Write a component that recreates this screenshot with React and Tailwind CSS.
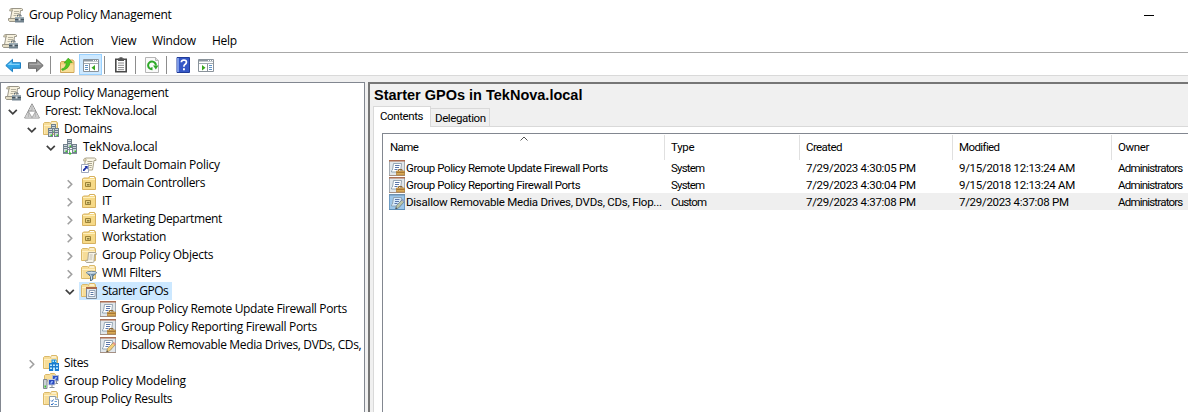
import React from "react";

function Svg({ children, className = "" }) {
  return (
    <svg viewBox="0 0 16 16" className={`block h-4 w-4 shrink-0 ${className}`}>
      {children}
    </svg>
  );
}

function ConsoleIcon({ className }) {
  return (
    <Svg className={className}>
      <path d="M3.5 1.5h10q1.5.2 1 2h-2l-1 8h-9l1.5-8z" fill="#f6f0dc" stroke="#9a9688" />
      <path d="M3 1.5q1.6.3 1.4 2.5H1.6Q1.4 2 3 1.5z" fill="#ddd3b4" stroke="#9a9688" strokeWidth=".7" />
      <path d="M6 4.5h5M6 6.5h5M5.5 8.5h3" stroke="#b5b19f" />
      <path d="M.5 11.5h8v3h-7q-1.5-.7-1-3z" fill="#e3dcc4" stroke="#9a9688" />
      <path d="M9.5 9.5V8H13v1.5" fill="none" stroke="#5d6971" />
      <path d="M7 10h9v5.5H7z" fill="#70818c" />
      <path d="M7 10h9v1.5H7z" fill="#9babb4" />
      <path d="M7 12.5h9" stroke="#46545e" />
      <path d="M10.5 11.5h2v2h-2z" fill="#e2e7e9" />
    </Svg>
  );
}

function ForestIcon() {
  return (
    <Svg>
      <path d="M8 .8 15.4 15H.6z" fill="#f4f4f4" stroke="#8d8d8d" />
      <path d="M8 1.8 11.3 8H4.7zM4.4 8.5 7.8 14.5H1zM11.6 8.5 15 14.5H8.2z" fill="#d0d0d0" />
      <path d="M8 2v5.5L5 8M4.4 9v5M11.6 9v5" stroke="#ababab" fill="none" strokeWidth=".7" />
      <path d="M4.3 8.2h7.4L8 14.7z" fill="#fff" stroke="#929292" strokeWidth=".8" />
    </Svg>
  );
}

function FolderBase() {
  return (
    <>
      <path d="M.5 13.5v-11l1-1h5l1 1 1-2h5l1 1.5v11.5z" fill="#f7dd98" stroke="#dab868" />
      <path d="M8.5 1.5h4.5v1H8.5z" fill="#fff" />
      <path d="M1 4.5h13" stroke="#fff0c3" />
      <path d="M1 5.5h1v7.5H1z" fill="#fbe9b4" />
    </>
  );
}

function Tower({ x, y }) {
  return (
    <g transform={`translate(${x} ${y})`}>
      <path d="M0 0h5v9H0z" fill="#73828d" />
      <path d="M1 1h3v7H1z" fill="#cfd7dd" />
      <path d="M1 2.500h3M1 4.500h3" stroke="#6b7d8a" />
      <path d="M2.500 6.500H4V8H2.500z" fill="#35d322" />
    </g>
  );
}

function DomainsIcon() {
  return (
    <Svg>
      <FolderBase />
      <Tower x={8} y={3} />
      <Tower x={5} y={7} />
      <Tower x={11} y={7} />
    </Svg>
  );
}

function DomainIcon() {
  return (
    <Svg>
      <Tower x={5} y={0} />
      <path d="M7.500 9v5M3 10.500h9" stroke="#82909a" />
      <Tower x={1} y={5} />
      <Tower x={10} y={5} />
      <path d="M1 14.500h14" stroke="#82909a" />
      <path d="M7 13.500h2v2H7z" fill="#35c827" />
    </Svg>
  );
}

function LinkIcon() {
  return (
    <Svg>
      <path d="M4.5 1h9q2 .5 1.5 2.5h-2L11.500 13H3z" fill="#faf6e6" stroke="#aaa38b" />
      <path d="M4 1q1.700.6 1 3H2.500Q2.300 1.500 4 1z" fill="#e4d9b7" stroke="#aaa38b" strokeWidth=".7" />
      <path d="M6.500 4.500h5M6.500 6.500h4.500M7 8.500h4M8.500 10.500h2" stroke="#aaa58f" />
      <path d="M.5 7.500h7v8h-7z" fill="#fff" stroke="#9fa7bc" />
      <path d="M2 14v-1.500L4.500 10 3.500 9h3.200v3.500L5.700 11.300 3.300 14z" fill="#1b2fa5" />
    </Svg>
  );
}

function OuIcon() {
  return (
    <Svg>
      <path d="M1.500 14.500V4l1-1h5l1-1.500h5l1 1.500v11.500z" fill="#f6d987" stroke="#d6b160" />
      <path d="M9 2h4v1H9z" fill="#fff" />
      <path d="M2 4.500h12" stroke="#fff0bd" />
      <path d="M4.500 7.500h5v4h-5z" fill="#e6cf80" stroke="#9c8236" />
      <path d="M6 9h2.500v1.500H6z" fill="#8a7d40" />
    </Svg>
  );
}

function GpoFolderIcon() {
  return (
    <Svg>
      <FolderBase />
      <path d="M7.500 5.500H14q1.800.3 1.300 2h-1.800L13 14.500q-.3 1-1.300 1H5.500q-1.200-.5-.7-2.200h2z" fill="#f7f4e9" stroke="#a49e8c" strokeWidth=".9" />
      <path d="M8.700 8h3M8.500 10h3M8.300 12h3" stroke="#b3ad9c" strokeWidth=".8" />
    </Svg>
  );
}

function WmiIcon() {
  return (
    <Svg>
      <FolderBase />
      <path d="M5.500 7.500h10l-3.700 4v3L9.500 16v-4.500z" fill="#6f90ac" stroke="#44617a" strokeWidth=".8" />
      <ellipse cx="10.500" cy="7.800" rx="5" ry="1.500" fill="#d0e0ec" stroke="#59758c" strokeWidth=".8" />
      <path d="M9.500 9.500 10.500 12v2.500" stroke="#d0e2f0" fill="none" />
    </Svg>
  );
}

function StarterFolderIcon() {
  return (
    <Svg>
      <FolderBase />
      <path d="M5.500 4.500h10v11h-10z" fill="#dfe9f3" stroke="#7e8b99" />
      <path d="M5 4h11v2H5z" fill="#a8694c" />
      <path d="M8.500 7.500H14v6H7.500z" fill="#fff" stroke="#7b8ea3" strokeWidth=".8" />
      <path d="M9.500 9.500h3M9.500 11.500h3" stroke="#5574a2" />
    </Svg>
  );
}

function StarterIcon({ edit, active }) {
  return (
    <Svg>
      <path d="M.5.5h15v15H.5z" fill={active ? "#9cc6ea" : "#e1e6ea"} stroke={active ? "#6f9dc4" : "#a5adb4"} />
      <path d="M0 0h16v1.500H0z" fill={active ? "#6e91b0" : "#ad6e53"} />
      <path d="M0 15h16v1H0z" fill={active ? "#5e8fb7" : "#a48f83"} />
      <path d="M4.500 3.500h8L11.500 12h-9q-.5-1.500 1-2z" fill={active ? "#d8ebfb" : "#fff"} stroke="#8b9dad" strokeWidth=".9" />
      <path d="M6 5.500h4.500M6 7.500h4M5.500 9.500h3" stroke="#5b76aa" />
      {edit ? (
        <>
          <path d="m6.500 15 1-3.500 6-6 2 2-6 6.500z" fill={active ? "#b9c3a6" : "#f4cf78"} stroke={active ? "#64788a" : "#a08a58"} strokeWidth=".7" />
          <path d="m12.700 6.300 1.300-1.300 2 2-1.300 1.300z" fill={active ? "#8f9fc4" : "#e4938b"} />
          <path d="m6.500 15 .6-1.800 1.300 1.200z" fill="#444" />
        </>
      ) : (
        <>
          <path d="M9.500 11V9.500H13V11" stroke="#8d6a38" fill="none" />
          <path d="M7.500 11h8v4h-8z" fill="#d8aa58" stroke="#b17f36" strokeWidth=".7" />
          <path d="M7.500 12.500h8" stroke="#9a6a2c" strokeWidth=".8" />
        </>
      )}
    </Svg>
  );
}

function SitesIcon() {
  return (
    <Svg>
      <FolderBase />
      <path d="M8.500 4.500h5v11h-5z" fill="#1689d8" />
      <path d="M6 8h10v8H6z" fill="#1b7bcd" />
      <path d="M9.500 5.500H11V7H9.500zM12 5.500h1V7h-1zM7 9.500h2V11H7zM10 9.500h2V11h-2zM13 9.500h2V11h-2zM7 12.500h2V14H7zM10 12.500h2V16h-2zM13 12.500h2V14h-2z" fill="#b9e8ff" />
    </Svg>
  );
}

function ModelingIcon() {
  return (
    <Svg>
      <path d="M1.500 8V2.500l1-1h4l1-1h4l1 1V8z" fill="#f7dd98" stroke="#dab868" />
      <path d="M.5 6.500H4v9H.5z" fill="#ccd2d6" stroke="#828b92" />
      <path d="M1.500 12.500H3v2H1.500z" fill="#37ca27" />
      <path d="M9.500 2.500h6V8h-6z" fill="#3052c2" stroke="#b5bdc8" />
      <path d="M11 6.500 12.500 4H14l-1 2.500z" fill="#94b8ff" />
      <path d="M5.500 6.500H12V12H5.500z" fill="#2948be" stroke="#cbd1db" />
      <path d="M7 10.500 8.500 8H10l-1 2.500z" fill="#94b8ff" />
      <path d="M6.500 14.500h5M9 12v2M13.500 8v2.500M12.500 10.500H15" stroke="#848d96" fill="none" />
    </Svg>
  );
}

function ResultsIcon() {
  return (
    <Svg>
      <FolderBase />
      <path d="M6.500 5.500h6l3 3v7h-9z" fill="#fff" stroke="#8a9bac" />
      <path d="M12.500 5.500v3h3" fill="#dce5ed" stroke="#8a9bac" strokeWidth=".8" />
      <path d="m8 9.500 1 1 1.500-2M8 13l1 1 1.500-2" stroke="#2a68c0" fill="none" />
      <path d="M11.500 10.500H14M11.500 13.500H14" stroke="#6aa0d5" />
    </Svg>
  );
}

function Arrow({ forward }) {
  return (
    <Svg className={forward ? "-scale-x-100" : ""}>
      <path d="M.8 8.500 7.500 2.300v3.400h8v5.600h-8v3.400z" fill={forward ? "#8b8b8b" : "#2ea5e8"} stroke={forward ? "#6a6a6a" : "#1c7fc2"} />
      <path d="M2.500 8.100 6.600 4.500v2.200h8v1.400z" fill={forward ? "#ababab" : "#82d3fb"} />
    </Svg>
  );
}

function UpFolderIcon() {
  return (
    <Svg>
      <path d="M1.500 15.500v-10l1-1h5l1-1.500H14l1 1.500v11z" fill="#f2cf79" stroke="#cfa659" />
      <path d="M2 7.500h12.500V15H2z" fill="#f8df98" />
      <path d="M2.500 12Q7 11 7.200 6H5l4.300-4.900 4 4.400H11q-.5 6-7.500 8z" fill="#4cc51f" stroke="#3a9a20" strokeWidth=".6" />
    </Svg>
  );
}

function PaneIcon({ right }) {
  return (
    <Svg>
      <path d="M.5 2.500h15v12H.5z" fill="#fff" stroke="#8a939b" />
      <path d="M1 3h14v1.500H1z" fill="#8d98a1" />
      <path d="M10 3.500h1M12 3.500h1M14 3.500h1" stroke="#fff" />
      <path d="M1 6.500h14" stroke="#a2abb2" />
      <path d={right ? "M9.500 7v7" : "M6.500 7v7"} stroke="#8a939b" />
      <path d={right ? "M11 8.500h3M11 10.500h3M11 12.500h3" : "M2 8.500h3M2 10.500h3M2 12.500h3"} stroke="#5f92c4" />
      <path d={right ? "m4 8 3.500 2.700L4 13.400z" : "m12 8-3.500 2.700 3.500 2.700z"} fill="#37a71d" />
    </Svg>
  );
}

function ClipboardIcon() {
  return (
    <Svg>
      <path d="M2.800 2.300h10.400v12.400H2.800z" fill="#fff" stroke="#4a4a4a" strokeWidth="1.600" />
      <path d="M5 1.500h1.500V.3h3v1.200H11V4H5z" fill="#555" />
      <path d="M5 6h6M5 8.300h6M5 10.600h6M5 12.700h6" stroke="#8a8a8a" />
    </Svg>
  );
}

function RefreshIcon() {
  return (
    <Svg>
      <path d="M1.500.5h10l3 3v12h-13z" fill="#fafafa" stroke="#b5b5b5" />
      <path d="M11.500.5v3h3" fill="#ddd" stroke="#b5b5b5" />
      <path d="M8 12.300A3.900 3.900 0 1 1 11.900 8.500" fill="none" stroke="#2ea928" strokeWidth="2" />
      <path d="M9 8.500h5.500l-2.600 4z" fill="#2ea928" />
      <path d="M8.500 13.500V10L6 11z" fill="#2ea928" />
    </Svg>
  );
}

function HelpIcon() {
  return (
    <Svg>
      <path d="M2 .5h12.500v15H2z" fill="#3457c6" stroke="#203b98" />
      <path d="M2 1h2v14H2z" fill="#7c9ae7" />
      <path d="M6.300 5.300Q6.500 3 8.900 3q2.700.1 2.500 2.300-.1 1.300-1.500 2.200-1 .6-1 2.300" fill="none" stroke="#fff" strokeWidth="1.700" />
      <path d="M8 11.300h1.900v1.900H8z" fill="#fff" />
    </Svg>
  );
}

function Chevron({ open }) {
  return (
    <svg viewBox="0 0 10 10" className="mt-0.5 block h-2.5 w-2.5 shrink-0">
      {open ? (
        <path d="m.8 2.800 4 4 4-4" fill="none" stroke="#404040" strokeWidth="1.700" />
      ) : (
        <path d="m2.700 1.200 4 4-4 4" fill="none" stroke="#a0a0a0" strokeWidth="1.600" />
      )}
    </svg>
  );
}

const indents = ["pl-[5px]", "pl-[8px]", "pl-[27px]", "pl-[46px]", "pl-[65px]", "pl-[84px]"];

const tree = [
  { depth: 0, label: "Group Policy Management", icon: <ConsoleIcon /> },
  { depth: 1, open: true, label: "Forest: TekNova.local", icon: <ForestIcon />, track: "tracking-[-0.33px]" },
  { depth: 2, open: true, label: "Domains", icon: <DomainsIcon /> },
  { depth: 3, open: true, label: "TekNova.local", icon: <DomainIcon /> },
  { depth: 4, label: "Default Domain Policy", icon: <LinkIcon />, track: "tracking-[-0.27px]" },
  { depth: 4, open: false, label: "Domain Controllers", icon: <OuIcon />, track: "tracking-[-0.34px]" },
  { depth: 4, open: false, label: "IT", icon: <OuIcon /> },
  { depth: 4, open: false, label: "Marketing Department", icon: <OuIcon />, track: "tracking-[-0.4px]" },
  { depth: 4, open: false, label: "Workstation", icon: <OuIcon />, track: "tracking-[-0.36px]" },
  { depth: 4, open: false, label: "Group Policy Objects", icon: <GpoFolderIcon /> },
  { depth: 4, open: false, label: "WMI Filters", icon: <WmiIcon />, track: "tracking-[-0.3px]" },
  { depth: 4, open: true, label: "Starter GPOs", icon: <StarterFolderIcon />, selected: true, track: "tracking-[-0.52px]" },
  { depth: 5, label: "Group Policy Remote Update Firewall Ports", icon: <StarterIcon />, track: "tracking-[-0.35px]" },
  { depth: 5, label: "Group Policy Reporting Firewall Ports", icon: <StarterIcon />, track: "tracking-[-0.31px]" },
  { depth: 5, label: "Disallow Removable Media Drives, DVDs, CDs,", icon: <StarterIcon edit />, track: "tracking-[-0.36px]" },
  { depth: 2, open: false, label: "Sites", icon: <SitesIcon />, track: "tracking-[-0.4px]" },
  { depth: 2, label: "Group Policy Modeling", icon: <ModelingIcon />, track: "tracking-[-0.2px]" },
  { depth: 2, label: "Group Policy Results", icon: <ResultsIcon />, track: "tracking-[-0.3px]" },
];

function TreeRow({ node }) {
  return (
    <div className={`flex h-[18px] items-center ${indents[node.depth]}`}>
      {node.depth > 0 && (
        <span className="flex w-3.5 shrink-0">{node.open !== undefined && <Chevron open={node.open} />}</span>
      )}
      <span className={`flex h-[18px] items-center whitespace-nowrap ${node.depth > 0 ? "pl-0.5" : ""} ${node.selected ? "bg-[#cce8ff] pr-1" : ""}`}>
        {node.icon}
        <span className={`pl-[5px] leading-[18px] ${node.track || ""}`}>{node.label}</span>
      </span>
    </div>
  );
}

const rows = [
  ["Group Policy Remote Update Firewall Ports", "System", "7/29/2023 4:30:05 PM", "9/15/2018 12:13:24 AM"],
  ["Group Policy Reporting Firewall Ports", "System", "7/29/2023 4:30:04 PM", "9/15/2018 12:13:24 AM"],
  ["Disallow Removable Media Drives, DVDs, CDs, Flop...", "Custom", "7/29/2023 4:37:08 PM", "7/29/2023 4:37:08 PM"],
];

const grid = "grid grid-cols-[282px_135px_153px_159px_1fr]";

function Separator() {
  return <span className="h-[18px] w-px shrink-0 bg-[#8d8d8d]" />;
}

export default function App() {
  return (
    <div className="flex h-[412px] w-[1188px] flex-col overflow-hidden bg-white font-['Open_Sans','Noto_Sans',sans-serif] text-[12px] tracking-[-0.25px] text-black">
      <header className="flex h-[30px] shrink-0 items-center pl-2">
        <ConsoleIcon />
        <h1 className="grow pl-[5px]">Group Policy Management</h1>
        <span className="mr-[34px] h-px w-2.5 bg-black" />
      </header>
      <nav className="flex h-[23px] shrink-0 items-center border-b border-[#a8a8a8] pl-0.5">
        <ConsoleIcon />
        <span className="w-[34px] pl-2">File</span>
        <span className="w-[51px] pl-2">Action</span>
        <span className="w-[41px] pl-2">View</span>
        <span className="w-[60px] pl-2">Window</span>
        <span className="pl-2">Help</span>
      </nav>
      <div className="flex h-[23px] shrink-0 items-center border-b border-[#d9d9d9] pt-0.5 pl-[5px]">
        <Arrow />
        <span className="w-[7px]" />
        <Arrow forward />
        <span className="w-1.5" />
        <Separator />
        <span className="w-2" />
        <UpFolderIcon />
        <span className="ml-1 flex h-[21px] w-[23px] items-center justify-center self-end border border-[#99d1ff] bg-[#cce8ff]">
          <PaneIcon />
        </span>
        <span className="w-0.5" />
        <Separator />
        <span className="w-2" />
        <ClipboardIcon />
        <span className="w-1.5" />
        <Separator />
        <span className="w-2" />
        <RefreshIcon />
        <span className="w-1.5" />
        <Separator />
        <span className="w-2" />
        <HelpIcon />
        <span className="w-[7px]" />
        <PaneIcon right />
      </div>
      <main className="flex min-h-0 grow bg-[#f0f0f0] pt-1.5">
        <aside className="w-[365px] shrink-0 overflow-hidden border-t border-r border-l border-[#828790] bg-white pt-px">
          <div className="-ml-px">
            {tree.map((n) => (
              <TreeRow key={n.label} node={n} />
            ))}
          </div>
        </aside>
        <section className="ml-[3px] flex min-w-0 grow flex-col border-t-2 border-l-2 border-[#767676] pl-[3px] font-[Roboto,sans-serif] text-[11.5px] tracking-[-0.4px]">
          <h2 className="h-[22px] shrink-0 pl-px font-['Liberation_Sans',sans-serif] text-[14.5px] leading-[23px] font-bold tracking-normal">
            Starter GPOs in TekNova.local
          </h2>
          <div className="z-10 -mb-px flex h-[21px] shrink-0 items-end">
            <span className="h-[21px] w-[58px] border-t border-r border-l border-[#d9d9d9] bg-white pl-1.5 leading-[19px]">Contents</span>
            <span className="h-[19px] w-[59px] border border-l-0 border-[#d9d9d9] pl-1 leading-[18px]">Delegation</span>
          </div>
          <div className="min-h-0 grow border-t border-l border-[#d9d9d9] bg-white pt-1.5 pl-2">
            <div className="h-full border-t border-l border-[#828790]">
              <div className={`${grid} relative h-[25px] pt-px leading-[25px] tracking-[-0.6px]`}>
                <span className="border-r border-[#e0e0e0] pl-[7px]">Name</span>
                <span className="border-r border-[#e0e0e0] pl-1.5 tracking-[-0.3px]">Type</span>
                <span className="border-r border-[#e0e0e0] pl-1.5">Created</span>
                <span className="border-r border-[#e0e0e0] pl-1.5">Modified</span>
                <span className="pl-1.5 tracking-[-0.4px]">Owner</span>
                <svg viewBox="0 0 8 5" className="absolute top-0.5 left-[137px] h-[5px] w-2">
                  <path d="M.5 4.500 4 1l3.500 3.500" fill="none" stroke="#555" />
                </svg>
              </div>
              {rows.map((r, i) => (
                <div key={r[0]} className={`${grid} h-[17px] leading-[19px] whitespace-nowrap ${i === 2 ? "bg-[#efefef]" : ""}`}>
                  <span className="flex">
                    <span className="flex h-[17px] w-[22px] shrink-0 items-center bg-white pl-1.5">
                      <StarterIcon edit={i === 2} active={i === 2} />
                    </span>
                    <span className={`pl-px ${i === 2 ? "tracking-[-0.24px]" : "tracking-[-0.43px]"}`}>{r[0]}</span>
                  </span>
                  <span className="pl-1.5 tracking-[-0.8px]">{r[1]}</span>
                  <span className="pl-1.5 tracking-[-0.3px]">{r[2]}</span>
                  <span className="pl-1.5 tracking-[-0.3px]">{r[3]}</span>
                  <span className="pl-1.5 tracking-[-0.8px]">Administrators</span>
                </div>
              ))}
            </div>
          </div>
        </section>
      </main>
    </div>
  );
}
